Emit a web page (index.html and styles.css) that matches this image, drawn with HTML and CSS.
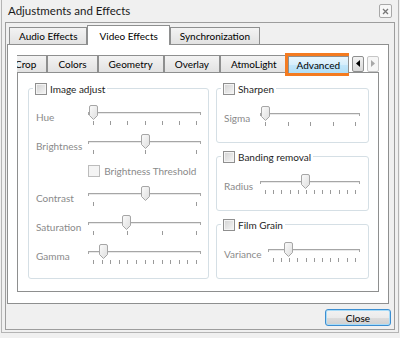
FILE: index.html
```html
<!DOCTYPE html>
<html lang="en">

<head>
    <meta charset="UTF-8">
    <title>Adjustments and Effects</title>
    <link rel="stylesheet" href="styles.css">
</head>

<body>
    <svg class="defs" width="0" height="0">
        <linearGradient id="tg" x1="0" y1="0" x2="1" y2="1">
            <stop offset="0" stop-color="#fbfbfb" />
            <stop offset="1" stop-color="#dedede" />
        </linearGradient>
    </svg>

    <div class="window">
        <div class="titlebar">
            <span class="title">Adjustments and Effects</span>
            <span class="close-box">
                <svg width="7" height="7" viewBox="0 0 7 7"><path d="M1 1L6 6M6 1L1 6" stroke="#777" stroke-width="1.3" /></svg>
            </span>
        </div>

        <div class="client">
            <div class="tabbar">
                <div class="tab">Audio Effects</div>
                <div class="tab active">Video Effects</div>
                <div class="tab">Synchronization</div>
            </div>

            <div class="pane">
                <div class="itabbar">
                    <div class="itabs">
                        <div class="itab first">Crop</div>
                        <div class="itab">Colors</div>
                        <div class="itab">Geometry</div>
                        <div class="itab">Overlay</div>
                        <div class="itab">AtmoLight</div>
                        <div class="itab hot">Advanced</div>
                    </div>
                    <div class="scroll">
                        <span class="sbtn"><svg width="4" height="7" viewBox="0 0 4 7"><path d="M4 0V7L0 3.5Z" fill="#000" /></svg></span>
                        <span class="sbtn off"><svg width="4" height="7" viewBox="0 0 4 7"><path d="M0 0V7L4 3.5Z" fill="#a8a8a8" /></svg></span>
                    </div>
                </div>

                <div class="ipane">
                    <fieldset class="group big">
                        <legend><span class="check"></span>Image adjust</legend>
                        <div class="rows">
                            <span class="lbl">Hue</span>
                            <div class="slider">
                                <div class="track"></div>
                                <div class="ticks"><i></i><i></i><i></i><i></i><i></i><i></i><i></i></div>
                                <div class="rail"><svg class="thumb" style="left:0%" width="9" height="15" viewBox="0 0 9 15"><path d="M.5 2Q.5.5 2 .5H7Q8.5.5 8.5 2V10.5L4.5 14.5L.5 10.5Z" fill="url(#tg)" stroke="#a6a6a6" /></svg></div>
                            </div>

                            <span class="lbl">Brightness</span>
                            <div class="slider">
                                <div class="track"></div>
                                <div class="ticks"><i></i><i></i><i></i></div>
                                <div class="rail"><svg class="thumb" style="left:50%" width="9" height="15" viewBox="0 0 9 15"><path d="M.5 2Q.5.5 2 .5H7Q8.5.5 8.5 2V10.5L4.5 14.5L.5 10.5Z" fill="url(#tg)" stroke="#a6a6a6" /></svg></div>
                            </div>

                            <div class="sub"><span class="check off"></span>Brightness Threshold</div>

                            <span class="lbl">Contrast</span>
                            <div class="slider">
                                <div class="track"></div>
                                <div class="ticks"><i></i><i></i></div>
                                <div class="rail"><svg class="thumb" style="left:50%" width="9" height="15" viewBox="0 0 9 15"><path d="M.5 2Q.5.5 2 .5H7Q8.5.5 8.5 2V10.5L4.5 14.5L.5 10.5Z" fill="url(#tg)" stroke="#a6a6a6" /></svg></div>
                            </div>

                            <span class="lbl">Saturation</span>
                            <div class="slider">
                                <div class="track"></div>
                                <div class="ticks"><i></i><i></i><i></i><i></i></div>
                                <div class="rail"><svg class="thumb" style="left:32%" width="9" height="15" viewBox="0 0 9 15"><path d="M.5 2Q.5.5 2 .5H7Q8.5.5 8.5 2V10.5L4.5 14.5L.5 10.5Z" fill="url(#tg)" stroke="#a6a6a6" /></svg></div>
                            </div>

                            <span class="lbl">Gamma</span>
                            <div class="slider">
                                <div class="track"></div>
                                <div class="ticks"><i></i><i></i><i></i><i></i><i></i><i></i><i></i><i></i><i></i><i></i><i></i><i></i><i></i></div>
                                <div class="rail"><svg class="thumb" style="left:9%" width="9" height="15" viewBox="0 0 9 15"><path d="M.5 2Q.5.5 2 .5H7Q8.5.5 8.5 2V10.5L4.5 14.5L.5 10.5Z" fill="url(#tg)" stroke="#a6a6a6" /></svg></div>
                            </div>
                        </div>
                    </fieldset>

                    <div class="col">
                        <fieldset class="group">
                            <legend><span class="check"></span>Sharpen</legend>
                            <div class="rows">
                                <span class="lbl">Sigma</span>
                                <div class="slider">
                                    <div class="track"></div>
                                    <div class="ticks"><i></i><i></i><i></i><i></i><i></i></div>
                                    <div class="rail"><svg class="thumb" style="left:0%" width="9" height="15" viewBox="0 0 9 15"><path d="M.5 2Q.5.5 2 .5H7Q8.5.5 8.5 2V10.5L4.5 14.5L.5 10.5Z" fill="url(#tg)" stroke="#a6a6a6" /></svg></div>
                                </div>
                            </div>
                        </fieldset>

                        <fieldset class="group">
                            <legend><span class="check"></span>Banding removal</legend>
                            <div class="rows">
                                <span class="lbl">Radius</span>
                                <div class="slider">
                                    <div class="track"></div>
                                    <div class="ticks"><i></i><i></i><i></i><i></i><i></i><i></i><i></i><i></i><i></i><i></i><i></i><i></i></div>
                                    <div class="rail"><svg class="thumb" style="left:44%" width="9" height="15" viewBox="0 0 9 15"><path d="M.5 2Q.5.5 2 .5H7Q8.5.5 8.5 2V10.5L4.5 14.5L.5 10.5Z" fill="url(#tg)" stroke="#a6a6a6" /></svg></div>
                                </div>
                            </div>
                        </fieldset>

                        <fieldset class="group">
                            <legend><span class="check"></span>Film Grain</legend>
                            <div class="rows">
                                <span class="lbl">Variance</span>
                                <div class="slider">
                                    <div class="track"></div>
                                    <div class="ticks"><i></i><i></i><i></i><i></i><i></i><i></i><i></i><i></i><i></i><i></i><i></i></div>
                                    <div class="rail"><svg class="thumb" style="left:19%" width="9" height="15" viewBox="0 0 9 15"><path d="M.5 2Q.5.5 2 .5H7Q8.5.5 8.5 2V10.5L4.5 14.5L.5 10.5Z" fill="url(#tg)" stroke="#a6a6a6" /></svg></div>
                                </div>
                            </div>
                        </fieldset>
                    </div>
                </div>
            </div>

            <div class="buttons">
                <button class="btn">Close</button>
            </div>
        </div>
    </div>
</body>

</html>
```

FILE: styles.css
```css
body {
    margin: 0;
    background: #f0f0f0;
    font: 10px/14px Lato, "Segoe UI", sans-serif;
    color: #000;
}

.defs {
    position: absolute;
}

.window {
    width: 398px;
    height: 333px;
    box-sizing: border-box;
    margin-left: 1px;
    border: 1px solid #b4b4b4;
    border-top: 0;
    background: #f0f0f0;
}

/* title bar */
.titlebar {
    height: 22px;
    display: flex;
    align-items: center;
    justify-content: space-between;
    padding: 0 6px 0 6px;
}

.title {
    font-size: 11.5px;
    color: #1a1a1a;
}

.close-box {
    width: 11px;
    height: 12px;
    border: 1px solid #a8a8a8;
    border-radius: 2px;
    background: #f7f7f7;
    display: flex;
    align-items: center;
    justify-content: center;
}

/* client area */
.client {
    margin: 0 3px;
    height: 308px;
    box-sizing: border-box;
    border: 1px solid #9d9d9d;
    padding-top: 2px;
}

.tabbar {
    display: flex;
    align-items: flex-end;
    height: 19px;
    padding-left: 3px;
}

.tab {
    height: 17px;
    box-sizing: border-box;
    padding: 0 9px;
    border: 1px solid #8e8f8f;
    border-bottom: 0;
    background: linear-gradient(#f3f3f3, #e2e2e2);
    display: flex;
    align-items: center;
}

.tab.active {
    height: 20px;
    margin-bottom: -1px;
    padding: 0 11px;
    background: #fff;
    position: relative;
    z-index: 1;
}

.pane {
    margin: 0 5px 0 1px;
    height: 260px;
    box-sizing: border-box;
    border: 1px solid #8e8f8f;
    background: #fff;
    padding: 10px 9px 0;
}

/* inner tabs */
.itabbar {
    display: flex;
    height: 17px;
}

.itabs {
    flex: 1;
    min-width: 0;
    display: flex;
    align-items: flex-end;
    overflow-x: clip;
}

.itab {
    flex: none;
    height: 17px;
    box-sizing: border-box;
    padding: 0 10px;
    border: 1px solid #8e8f8f;
    border-bottom: 0;
    background: linear-gradient(#f3f3f3, #e2e2e2);
    display: flex;
    align-items: center;
}

.itab.first {
    margin-left: -13px;
}

.itab.hot {
    height: 17px;
    margin-bottom: -1px;
    padding: 0 8px;
    background: linear-gradient(#e9f6fd, #d5eefc 50%, #c3e7fb 50%, #b2def6);
    outline: 3px solid #f47b20;
    position: relative;
    z-index: 1;
}

.scroll {
    display: flex;
    gap: 3px;
    margin-left: 3px;
    align-self: center;
}

.sbtn {
    width: 12px;
    height: 16px;
    box-sizing: border-box;
    border: 1px solid #8e8f8f;
    border-radius: 2px;
    background: linear-gradient(#f2f2f2, #d8d8d8);
    display: flex;
    align-items: center;
    justify-content: center;
}

.sbtn.off {
    border-color: #c6c6c6;
    background: #f6f6f6;
}

.ipane {
    height: 220px;
    box-sizing: border-box;
    border: 1px solid #8e8f8f;
    padding: 9px 9px 0 10px;
    display: grid;
    grid-template-columns: 181px 1fr;
    column-gap: 7px;
    align-items: start;
}

/* group boxes */
.group {
    margin: 0;
    min-width: 0;
    border: 1px solid #d5dfe5;
    border-radius: 3px;
    padding: 11px 8px 14px 7px;
}

.group.big {
    padding: 10px 7px 12px 7px;
}

.group legend {
    display: flex;
    align-items: center;
    gap: 3px;
    height: 13px;
    padding: 0 2px;
    margin-left: -3px;
    color: #1e1e1e;
}

.check {
    width: 12px;
    height: 12px;
    box-sizing: border-box;
    border: 1px solid #8f8f8f;
    background: linear-gradient(135deg, #d2d2d2, #f6f6f6);
    box-shadow: inset 0 0 0 1px #f4f4f4;
}

.check.off {
    border-color: #bcbcbc;
    background: #f4f4f4;
}

.col {
    display: flex;
    flex-direction: column;
    gap: 7px;
}

.rows {
    display: grid;
    grid-template-columns: minmax(30px, auto) 1fr;
    column-gap: 6px;
    row-gap: 7px;
}

.big .rows {
    grid-template-columns: minmax(46px, auto) 1fr;
}

.lbl {
    padding-top: 5px;
    color: #8a8a8a;
    white-space: nowrap;
}

.sub {
    grid-column: 2;
    height: 16px;
    display: flex;
    align-items: center;
    gap: 4px;
    color: #8a8a8a;
}

/* sliders */
.slider {
    position: relative;
    height: 22px;
}

.track {
    position: relative;
    margin-top: 7px;
    height: 1px;
    background: #a6a6a6;
    box-shadow: 0 1px 0 #e9e9e9;
}

.track::before,
.track::after {
    content: "";
    position: absolute;
    top: 0;
    width: 1px;
    height: 3px;
    background: #a6a6a6;
}

.track::before {
    left: 0;
}

.track::after {
    right: 0;
}

.ticks {
    margin: 8px 4px 0 5px;
    height: 4px;
    display: flex;
    justify-content: space-between;
}

.ticks i {
    width: 1px;
    background: #9a9a9a;
}

.rail {
    position: absolute;
    top: 0;
    left: 5px;
    right: 4px;
    height: 15px;
}

.thumb {
    position: absolute;
    top: 0;
    margin-left: -4px;
}

/* bottom buttons */
.buttons {
    display: flex;
    justify-content: flex-end;
    padding: 5px 3px 0 0;
}

.btn {
    width: 66px;
    height: 17px;
    padding: 0;
    font: inherit;
    color: #000;
    border: 1px solid #3c8ed1;
    border-radius: 3px;
    background: linear-gradient(#f2f2f2, #ebebeb 50%, #dddddd 50%, #cfcfcf);
    box-shadow: inset 0 0 0 1px #a8dcf8;
}
```
